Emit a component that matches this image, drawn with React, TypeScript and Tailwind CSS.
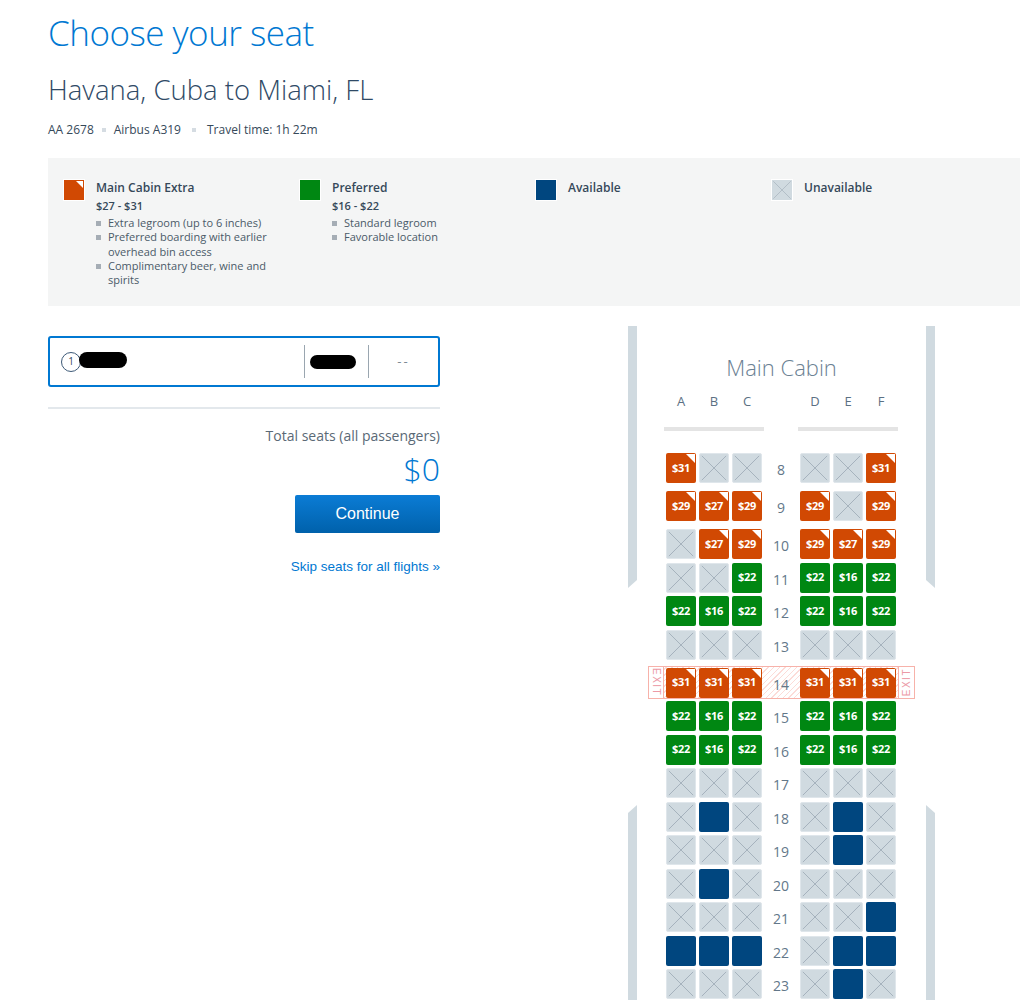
import React from 'react';

type Kind = 'mce' | 'pref' | 'avail' | 'x';
type Seat = { k: Kind; p?: string };

const M = (p: string): Seat => ({ k: 'mce', p });
const G = (p: string): Seat => ({ k: 'pref', p });
const N: Seat = { k: 'avail' };
const X: Seat = { k: 'x' };

type Row = { n: number; exit?: boolean; extra?: boolean; seats: Seat[] };

const rows: Row[] = [
    { n: 8, seats: [M('$31'), X, X, X, X, M('$31')] },
    { n: 9, extra: true, seats: [M('$29'), M('$27'), M('$29'), M('$29'), X, M('$29')] },
    { n: 10, extra: true, seats: [X, M('$27'), M('$29'), M('$29'), M('$27'), M('$29')] },
    { n: 11, seats: [X, X, G('$22'), G('$22'), G('$16'), G('$22')] },
    { n: 12, seats: [G('$22'), G('$16'), G('$22'), G('$22'), G('$16'), G('$22')] },
    { n: 13, seats: [X, X, X, X, X, X] },
    { n: 14, exit: true, extra: true, seats: [M('$31'), M('$31'), M('$31'), M('$31'), M('$31'), M('$31')] },
    { n: 15, seats: [G('$22'), G('$16'), G('$22'), G('$22'), G('$16'), G('$22')] },
    { n: 16, seats: [G('$22'), G('$16'), G('$22'), G('$22'), G('$16'), G('$22')] },
    { n: 17, seats: [X, X, X, X, X, X] },
    { n: 18, seats: [X, N, X, X, N, X] },
    { n: 19, seats: [X, X, X, X, N, X] },
    { n: 20, seats: [X, N, X, X, X, X] },
    { n: 21, seats: [X, X, X, X, X, N] },
    { n: 22, seats: [N, N, N, X, N, N] },
    { n: 23, seats: [X, X, X, X, N, X] },
];

function Corner({ size = 9 }: { size?: number }) {
    return (
        <svg className="absolute top-[1px] right-[1px]" width={size} height={size} viewBox="0 0 10 10">
            <path d="M0 0H10V10Z" fill="#ffffff" />
        </svg>
    );
}

function Cross({ size }: { size: number }) {
    return (
        <svg width={size} height={size} viewBox="0 0 30 30" className="block">
            <path d="M2 2L28 28M28 2L2 28" stroke="#a3afba" strokeWidth="1" fill="none" />
        </svg>
    );
}

function SeatBox({ seat }: { seat: Seat }) {
    if (seat.k === 'x') {
        return (
            <div className="w-[30px] h-[30px] rounded-[2px] bg-[#d0dae0] border border-[#dfe6eb]">
                <Cross size={28} />
            </div>
        );
    }
    if (seat.k === 'avail') {
        return <div className="w-[30px] h-[30px] rounded-[2px] bg-[#00467f]" />;
    }
    const bg = seat.k === 'mce' ? 'bg-[#d14903]' : 'bg-[#008712]';
    return (
        <div className={`relative w-[30px] h-[30px] rounded-[2px] ${bg} flex items-center justify-center text-white text-[11px] font-bold tracking-[-0.3px]`}>
            {seat.p}
            {seat.k === 'mce' && <Corner />}
        </div>
    );
}

function SeatRow({ row }: { row: Row }) {
    const left = row.seats.slice(0, 3);
    const right = row.seats.slice(3);
    return (
        <div
            className={`mx-[11px] flex h-[33.5px] border ${row.exit ? 'border-[#f7b2aa] bg-[image:repeating-linear-gradient(135deg,#fcdcd8_0px,#fcdcd8_1px,#ffffff_1px,#ffffff_4px)]' : 'border-transparent'} ${row.extra ? 'mt-[4.5px]' : ''}`}
        >
            <div className={`w-[15px] flex items-center justify-center ${row.exit ? 'border-r border-[#f7b2aa] bg-white' : ''}`}>
                {row.exit && (
                    <span className="[writing-mode:vertical-rl] text-[10px] tracking-[1.5px] text-[#ec9aa6] font-['Liberation_Sans',sans-serif]">EXIT</span>
                )}
            </div>
            <div className="flex-1 flex items-center px-[2px]">
                <div className="flex gap-[3px]">
                    {left.map((s, i) => <SeatBox key={i} seat={s} />)}
                </div>
                <div className="w-[38px] text-center text-[14px] text-[#637789] pt-[3px]">{row.n}</div>
                <div className="flex gap-[3px]">
                    {right.map((s, i) => <SeatBox key={i} seat={s} />)}
                </div>
            </div>
            <div className={`w-[16px] flex items-center justify-center ${row.exit ? 'border-l border-[#f7b2aa] bg-white' : ''}`}>
                {row.exit && (
                    <span className="[writing-mode:vertical-rl] rotate-180 text-[10px] tracking-[1.5px] text-[#ec9aa6] font-['Liberation_Sans',sans-serif]">EXIT</span>
                )}
            </div>
        </div>
    );
}

function LegendIcon({ kind }: { kind: Kind }) {
    if (kind === 'x') {
        return (
            <div className="w-[22px] h-[22px] border border-white bg-[#d0dae0] shrink-0">
                <Cross size={20} />
            </div>
        );
    }
    const bg = kind === 'mce' ? 'bg-[#d14903]' : kind === 'pref' ? 'bg-[#008712]' : 'bg-[#00467f]';
    return (
        <div className={`relative w-[22px] h-[22px] border border-white shrink-0 ${bg}`}>
            {kind === 'mce' && <Corner size={7} />}
        </div>
    );
}

function Bullet({ children }: { children: React.ReactNode }) {
    return (
        <li className="flex">
            <span className="w-[5px] h-[5px] bg-[#a5adb5] mt-[5px] mr-[7px] shrink-0" />
            <span>{children}</span>
        </li>
    );
}

function LegendItem({ kind, title, price, bullets }: { kind: Kind; title: string; price?: string; bullets?: string[] }) {
    return (
        <div className="w-[236px] flex gap-[11px]">
            <LegendIcon kind={kind} />
            <div className="w-[180px]">
                <div className="text-[12px] leading-[17px] font-semibold text-[#36495a]">{title}</div>
                {price && <div className="mt-[2px] text-[11px] leading-[16px] font-semibold text-[#36495a]">{price}</div>}
                {bullets && (
                    <ul className="mt-[2px] text-[11px] leading-[14.3px] text-[#4a5a68] w-[174px]">
                        {bullets.map((b) => <Bullet key={b}>{b}</Bullet>)}
                    </ul>
                )}
            </div>
        </div>
    );
}

function Wall({ side }: { side: 'left' | 'right' }) {
    return (
        <div className="w-[9px] flex flex-col shrink-0">
            <div className={`h-[262px] bg-[#d0dae0] ${side === 'left' ? '[clip-path:polygon(0_0,100%_0,100%_254px,0_100%)]' : '[clip-path:polygon(0_0,100%_0,100%_100%,0_254px)]'}`} />
            <div className="h-[217px]" />
            <div className={`flex-1 bg-[#d0dae0] ${side === 'left' ? '[clip-path:polygon(0_8px,100%_0,100%_100%,0_100%)]' : '[clip-path:polygon(0_0,100%_8px,100%_100%,0_100%)]'}`} />
        </div>
    );
}

export default function App() {
    const letters = ['A', 'B', 'C', 'D', 'E', 'F'];
    return (
        <div className="min-h-screen bg-white pl-[48px] pt-[11px] font-['Open_Sans',sans-serif] text-[#36495a]">
            <h1 className="text-[35px] leading-[44px] font-light tracking-[-0.5px] text-[#0078d2]">Choose your seat</h1>
            <h2 className="mt-[19px] text-[27.5px] leading-[32px] font-light text-[#2f4a66]">Havana, Cuba to Miami, FL</h2>
            <div className="mt-[16px] flex items-center text-[12px] leading-[16px] text-[#36495a]">
                <span>AA 2678</span>
                <span className="mx-[8px] w-[4px] h-[4px] bg-[#d5dce2]" />
                <span>Airbus A319</span>
                <span className="mx-[11px] w-[4px] h-[4px] bg-[#d5dce2]" />
                <span>Travel time: 1h 22m</span>
            </div>

            <div className="mt-[20px] w-[972px] h-[148px] bg-[#f4f5f5] pt-[21px] pl-[15px] flex">
                <LegendItem
                    kind="mce"
                    title="Main Cabin Extra"
                    price="$27 - $31"
                    bullets={[
                        'Extra legroom (up to 6 inches)',
                        'Preferred boarding with earlier overhead bin access',
                        'Complimentary beer, wine and spirits',
                    ]}
                />
                <LegendItem kind="pref" title="Preferred" price="$16 - $22" bullets={['Standard legroom', 'Favorable location']} />
                <LegendItem kind="avail" title="Available" />
                <LegendItem kind="x" title="Unavailable" />
            </div>

            <div className="mt-[20px] flex items-start">
                <div className="w-[392px] mt-[10px] flex flex-col">
                    <div className="h-[51px] border-2 border-[#0078d2] rounded-[3px] flex items-center">
                        <div className="w-[254px] flex items-center pl-[11px]">
                            <span className="w-[20px] h-[20px] rounded-full border border-[#3d5a78] bg-white flex items-center justify-center text-[10px] text-[#36495a]">1</span>
                            <span className="-ml-[2px] -mt-[4px] w-[48px] h-[16px] rounded-full bg-black" />
                        </div>
                        <div className="w-px h-[33px] bg-[#9aa6b0]" />
                        <div className="w-[63px] pl-[5px] flex items-center">
                            <span className="w-[46px] h-[14px] rounded-full bg-black" />
                        </div>
                        <div className="w-px h-[33px] bg-[#9aa6b0]" />
                        <div className="flex-1 text-center text-[13px] text-[#7d8a95] tracking-[2px]">--</div>
                    </div>
                    <div className="mt-[20px] h-[2px] bg-[#e3e8ec]" />
                    <div className="mt-[17px] text-right text-[14px] leading-[20px] text-[#5a6976]">Total seats (all passengers)</div>
                    <div className="mt-[5px] text-right text-[32px] leading-[36px] font-light text-[#0078d2]">$0</div>
                    <div className="mt-[8px] flex justify-end">
                        <button className="w-[145px] h-[38px] rounded-[2px] bg-[linear-gradient(#0b7cd5,#0061ab)] text-white text-[16px] font-['Liberation_Sans',Arial,sans-serif]">
                            Continue
                        </button>
                    </div>
                    <div className="mt-[26px] text-right text-[13.5px] leading-[16px] text-[#0078d2] font-['Liberation_Sans',Arial,sans-serif]">
                        Skip seats for all flights »
                    </div>
                </div>

                <div className="ml-[188px] flex">
                    <Wall side="left" />
                    <div className="w-[289px] bg-white pt-[28px] pb-[40px]">
                        <div className="text-center text-[22px] leading-[26px] font-light text-[#6b8193]">Main Cabin</div>
                        <div className="mt-[13px] mx-[11px] flex h-[16px] border border-transparent">
                            <div className="w-[15px]" />
                            <div className="flex-1 flex items-center px-[2px]">
                                <div className="flex gap-[3px]">
                                    {letters.slice(0, 3).map((l) => (
                                        <div key={l} className="w-[30px] text-center text-[13px] leading-[16px] text-[#5b7083]">{l}</div>
                                    ))}
                                </div>
                                <div className="w-[38px]" />
                                <div className="flex gap-[3px]">
                                    {letters.slice(3).map((l) => (
                                        <div key={l} className="w-[30px] text-center text-[13px] leading-[16px] text-[#5b7083]">{l}</div>
                                    ))}
                                </div>
                            </div>
                            <div className="w-[16px]" />
                        </div>
                        <div className="mt-[18px] pl-[27px] flex gap-[34px]">
                            <div className="w-[100px] h-[4px] bg-[#e4e4e4]" />
                            <div className="w-[100px] h-[4px] bg-[#e4e4e4]" />
                        </div>
                        <div className="mt-[20.25px]">
                            {rows.map((r) => <SeatRow key={r.n} row={r} />)}
                        </div>
                    </div>
                    <Wall side="right" />
                </div>
            </div>
        </div>
    );
}
